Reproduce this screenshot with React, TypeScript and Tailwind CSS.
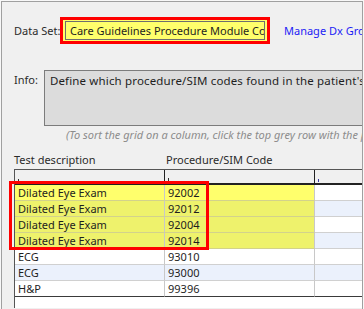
import React from 'react'

interface Row {
  desc: string
  code: string
}

const rows: Row[] = [
  { desc: 'Dilated Eye Exam', code: '92002' },
  { desc: 'Dilated Eye Exam', code: '92012' },
  { desc: 'Dilated Eye Exam', code: '92004' },
  { desc: 'Dilated Eye Exam', code: '92014' },
  { desc: 'ECG', code: '93010' },
  { desc: 'ECG', code: '93000' },
  { desc: 'H&P', code: '99396' },
]

const font = { fontFamily: '"Noto Sans", "Open Sans", sans-serif' }

// base colour of a row (alternating white / pale blue)
function baseClass(i: number) {
  return i % 2 === 1 ? 'bg-[#ebf1fc]' : 'bg-white'
}

// first four rows are the highlighted dilated eye exam codes
function cellClass(i: number) {
  if (i === 0) return 'bg-[#ffff6c] border-b-[#d2d28c]'
  if (i < 4) return 'bg-[#eef26c] border-b-[#d2d28c]'
  return ''
}

export default function App() {
  return (
    <div className="w-[364px] h-[309px] bg-[#f8f8f8] overflow-hidden text-[11px] leading-[16px] text-[#2b2b2b]" style={font}>
      <div className="relative ml-px mt-px w-[362px] h-[308px] border-l border-t border-r border-[#a0a0a0] bg-[#f0f0f0] overflow-hidden">
        {/* Data set */}
        <div className="flex items-center mt-[15px] pl-[12px] whitespace-nowrap">
          <span className="w-[46px]">Data Set:</span>
          <div className="w-[210px] h-[27px] shrink-0 border-[3px] border-[#ff0000] bg-[#ffff6c] p-[1px] pl-[2px] pr-[2px]">
            <div className="h-full border border-[#6e6e6e] bg-[#ffff6c] pl-[4px] leading-[18px] overflow-hidden text-[#1e1e1e]">
              Care Guidelines Procedure Module Co
            </div>
          </div>
          <span className="ml-[14px] text-[#1c1cf5]">Manage Dx Groups</span>
        </div>

        {/* Info */}
        <div className="flex mt-[26px] pl-[12px] whitespace-nowrap">
          <span className="w-[51px] text-right pr-[6px] pt-[2px]">Info:</span>
          <div className="w-[320px] shrink-0 h-[56px] border border-[#7c7c7c] bg-[#dcdcdc] pl-[5px] pt-[2px] text-[11.5px] tracking-[0.15px] text-[#1e1e1e]">
            Define which procedure/SIM codes found in the patient's chart count toward this item.
          </div>
        </div>
        <div className="mt-[1px] pl-[64px] italic text-[#8c8c8c] whitespace-nowrap">
          (To sort the grid on a column, click the top grey row with the pointer.)
        </div>

        {/* Grid headings */}
        <div className="flex mt-[9px] pl-[12px] whitespace-nowrap">
          <span className="w-[152px]">Test description</span>
          <span>Procedure/SIM Code</span>
        </div>

        {/* Grid */}
        <div className="ml-[12px] mt-[1px] w-[360px] h-[139px] border-l border-t border-[#555] bg-white">
          <div className="flex h-[15px] bg-[#f0f0f0] border-b-2 border-[#222]">
            <div className="w-[150px] border-r border-[#222] relative">
              <span className="absolute left-[3px] bottom-[1px] w-px h-[3px] bg-[#333]" />
            </div>
            <div className="w-[150px] border-r border-[#222] relative">
              <span className="absolute left-[3px] bottom-[2px] w-px h-[3px] bg-[#333]" />
            </div>
            <div className="flex-1 relative">
              <span className="absolute left-[3px] bottom-[1px] w-px h-[3px] bg-[#3a3aa0]" />
            </div>
          </div>
          {rows.map((r, i) => {
            const last = i === rows.length - 1
            const cell = `border-b border-r border-r-[#c8c8c8] ${last ? 'border-b-[#3a3a3a]' : 'border-b-[#d0d0d0]'} ${cellClass(i)}`
            return (
              <div key={i} className={`flex h-[16px] ${baseClass(i)}`}>
                <div className={`w-[150px] pl-[3px] leading-[15px] text-[#1e1e1e] ${cell}`}>{r.desc}</div>
                <div className={`w-[150px] pl-[3px] leading-[15px] text-[#1e1e1e] ${cell}`}>{r.code}</div>
                <div className={`flex-1 border-b ${last ? 'border-b-[#3a3a3a]' : 'border-b-[#d0d0d0]'}`} />
              </div>
            )
          })}
        </div>

        {/* red annotation over the highlighted rows */}
        <div className="absolute left-[7px] top-[179px] w-[200px] h-[69px] border-[3px] border-[#ff0000] pointer-events-none" />
      </div>
    </div>
  )
}
